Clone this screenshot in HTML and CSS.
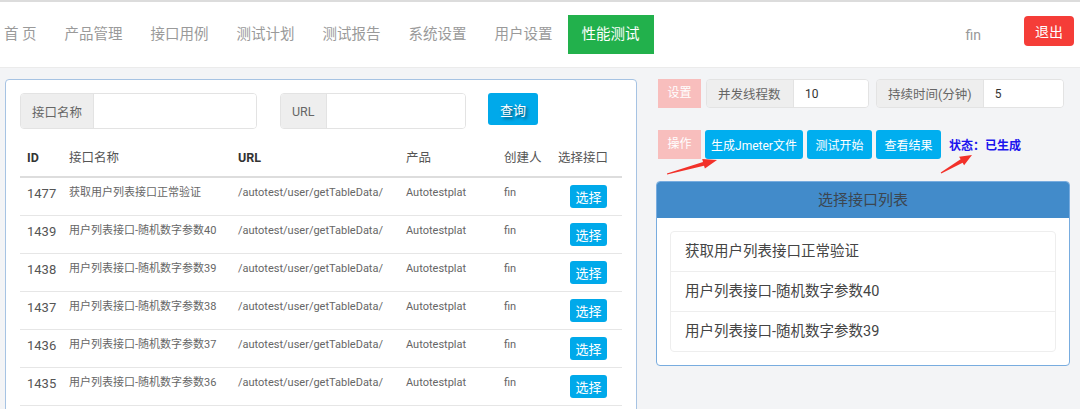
FILE: index.html
```html
<!DOCTYPE html>
<html>
<head>
    <meta charset="utf-8">
    <title>性能测试</title>
    <link rel="stylesheet" href="styles.css">
</head>
<body>
    <div id="header">
        <ul id="nav">
            <li class="nav-item first">首 页</li>
            <li class="nav-item">产品管理</li>
            <li class="nav-item">接口用例</li>
            <li class="nav-item">测试计划</li>
            <li class="nav-item">测试报告</li>
            <li class="nav-item">系统设置</li>
            <li class="nav-item">用户设置</li>
            <li class="nav-item active">性能测试</li>
        </ul>
        <div id="user-box">
            <span class="user-name">fin</span>
            <button class="logout-button">退出</button>
        </div>
    </div>

    <div id="main">
        <!-- 接口一覧 -->
        <div class="left-panel">
            <div class="search-row">
                <div class="input-group name-group">
                    <span class="input-label">接口名称</span>
                    <input class="input-box" type="text">
                </div>
                <div class="input-group url-group">
                    <span class="input-label">URL</span>
                    <input class="input-box" type="text">
                </div>
                <button class="search-button">查询</button>
            </div>

            <table class="api-table">
                <colgroup>
                    <col class="col-id">
                    <col class="col-name">
                    <col class="col-url">
                    <col class="col-product">
                    <col class="col-creator">
                    <col class="col-select">
                </colgroup>
                <thead>
                    <tr>
                        <th>ID</th>
                        <th>接口名称</th>
                        <th>URL</th>
                        <th>产品</th>
                        <th>创建人</th>
                        <th>选择接口</th>
                    </tr>
                </thead>
                <tbody>
                    <tr>
                        <td class="cell-id">1477</td>
                        <td>获取用户列表接口正常验证</td>
                        <td>/autotest/user/getTableData/</td>
                        <td>Autotestplat</td>
                        <td>fin</td>
                        <td><button class="select-button">选择</button></td>
                    </tr>
                    <tr>
                        <td class="cell-id">1439</td>
                        <td>用户列表接口-随机数字参数40</td>
                        <td>/autotest/user/getTableData/</td>
                        <td>Autotestplat</td>
                        <td>fin</td>
                        <td><button class="select-button">选择</button></td>
                    </tr>
                    <tr>
                        <td class="cell-id">1438</td>
                        <td>用户列表接口-随机数字参数39</td>
                        <td>/autotest/user/getTableData/</td>
                        <td>Autotestplat</td>
                        <td>fin</td>
                        <td><button class="select-button">选择</button></td>
                    </tr>
                    <tr>
                        <td class="cell-id">1437</td>
                        <td>用户列表接口-随机数字参数38</td>
                        <td>/autotest/user/getTableData/</td>
                        <td>Autotestplat</td>
                        <td>fin</td>
                        <td><button class="select-button">选择</button></td>
                    </tr>
                    <tr>
                        <td class="cell-id">1436</td>
                        <td>用户列表接口-随机数字参数37</td>
                        <td>/autotest/user/getTableData/</td>
                        <td>Autotestplat</td>
                        <td>fin</td>
                        <td><button class="select-button">选择</button></td>
                    </tr>
                    <tr>
                        <td class="cell-id">1435</td>
                        <td>用户列表接口-随机数字参数36</td>
                        <td>/autotest/user/getTableData/</td>
                        <td>Autotestplat</td>
                        <td>fin</td>
                        <td><button class="select-button">选择</button></td>
                    </tr>
                    <tr>
                        <td class="cell-id">&nbsp;</td>
                        <td></td>
                        <td></td>
                        <td></td>
                        <td></td>
                        <td></td>
                    </tr>
                </tbody>
            </table>
        </div>

        <!-- 設定と操作 -->
        <div class="right-column">
            <div class="setting-row">
                <span class="tag-label">设置</span>
                <div class="input-group thread-group">
                    <span class="input-label">并发线程数</span>
                    <input class="input-box small" type="text" value="10">
                </div>
                <div class="input-group time-group">
                    <span class="input-label">持续时间(分钟)</span>
                    <input class="input-box small" type="text" value="5">
                </div>
            </div>

            <div class="action-row">
                <span class="tag-label">操作</span>
                <button class="action-button jmeter">生成Jmeter文件</button>
                <button class="action-button">测试开始</button>
                <button class="action-button">查看结果</button>
                <span class="status-text">状态：已生成</span>
            </div>

            <div class="list-panel">
                <div class="list-heading">选择接口列表</div>
                <div class="list-body">
                    <ul class="list-group">
                        <li>获取用户列表接口正常验证</li>
                        <li>用户列表接口-随机数字参数40</li>
                        <li>用户列表接口-随机数字参数39</li>
                    </ul>
                </div>
            </div>
        </div>
    </div>

    <!-- 赤い矢印 -->
    <svg class="arrows" width="1080" height="409" viewBox="0 0 1080 409">
        <polygon fill="#f2312a" points="667.1,172.5 704,163.7 704.9,166.6 717,158 702.2,157 703,159.9 666.9,171.5"/>
        <polygon fill="#f2312a" points="941.3,171.4 962.6,160.7 964.1,163.3 972,153 959.1,154.7 960.6,157.3 940.7,170.6"/>
    </svg>
</body>
</html>
```

FILE: styles.css
```css
/* 全体 */
body {
    margin: 0;
    height: 409px;
    overflow: hidden;
    position: relative;
    background-color: #f3f4f6;
    font-family: Roboto, "Noto Sans CJK SC", sans-serif;
    color: #555;
    border-top: 2px solid #dcdcdc;
    box-sizing: border-box;
}

button,
input {
    font-family: Roboto, "Noto Sans CJK SC", sans-serif;
}

/* ヘッダー */
#header {
    height: 65px;
    background-color: #fff;
    border-bottom: 1px solid #ebebeb;
    display: flex;
    align-items: center;
}

#nav {
    list-style: none;
    margin: 0;
    padding: 0;
    display: flex;
    align-items: center;
}

.nav-item {
    font-size: 14.5px;
    color: #9a9a9a;
    padding: 0 14px;
    height: 39px;
    line-height: 39px;
}

.nav-item.first {
    margin-left: -10px;
}

.nav-item.active {
    background-color: #22b14c;
    color: #fff;
    margin-left: 1px;
}

#user-box {
    margin-left: auto;
    display: flex;
    align-items: center;
    padding-right: 6px;
}

.user-name {
    font-size: 14px;
    color: #999;
    margin-right: 43px;
}

.logout-button {
    width: 50px;
    height: 30px;
    border: none;
    border-radius: 4px;
    background-color: #f53d38;
    color: #fff;
    font-size: 14px;
    padding: 0;
    margin-top: -8px;
}

/* メイン */
#main {
    display: flex;
    align-items: flex-start;
    padding-top: 11px;
}

.left-panel {
    width: 603px;
    margin-left: 5px;
    background-color: #fff;
    border: 1px solid #a6c3e3;
    border-radius: 4px;
    padding: 13px 13px 40px 14px;
}

.search-row {
    display: flex;
    align-items: flex-start;
}

.input-group {
    display: flex;
    height: 36px;
    border: 1px solid #e3e3e3;
    border-radius: 4px;
    box-sizing: border-box;
    overflow: hidden;
}

.input-label {
    background-color: #eee;
    border-right: 1px solid #e3e3e3;
    font-size: 12.5px;
    color: #666;
    padding: 0 11px;
    display: flex;
    align-items: center;
    white-space: nowrap;
}

.input-box {
    border: none;
    outline: none;
    flex: 1;
    min-width: 0;
    padding: 0 10px;
    font-size: 12px;
    color: #333;
}

.name-group {
    width: 237px;
}

.url-group {
    width: 186px;
    margin-left: 23px;
}

.search-button {
    width: 50px;
    height: 32px;
    margin-left: 22px;
    border: none;
    border-radius: 3px;
    background-color: #00a9ea;
    color: #fff;
    font-size: 13px;
    padding: 0;
    text-shadow: 2px 2px 3px rgba(0, 0, 0, 0.55);
}

/* テーブル */
.api-table {
    width: 602px;
    margin-top: 11px;
    border-collapse: collapse;
    table-layout: fixed;
}

.col-id { width: 42px; }
.col-name { width: 169px; }
.col-url { width: 168px; }
.col-product { width: 98px; }
.col-creator { width: 54px; }
.col-select { width: 71px; }

.api-table th {
    text-align: left;
    font-size: 12.5px;
    font-weight: normal;
    color: #555;
    padding: 8px 0 8px 7px;
    line-height: 20px;
    border-bottom: 2px solid #ddd;
    white-space: nowrap;
}

.api-table th:first-child,
.api-table th:nth-child(3) {
    font-weight: bold;
    color: #333;
}

.api-table td {
    font-size: 11px;
    color: #666;
    padding: 7px 0 7px 7px;
    line-height: 16px;
    vertical-align: top;
    border-bottom: 1px solid #e6e6e6;
    white-space: nowrap;
    overflow: hidden;
}

.api-table td:nth-child(6) {
    padding-left: 19px;
}

.api-table td.cell-id {
    font-size: 13px;
    color: #555;
    padding-top: 8px;
}

.select-button {
    width: 37px;
    height: 23px;
    border: none;
    border-radius: 3px;
    background-color: #00a9ea;
    color: #fff;
    font-size: 13px;
    padding: 0;
    display: block;
}

/* 右側 */
.right-column {
    width: 414px;
    margin-left: 19px;
}

.setting-row,
.action-row {
    display: flex;
    align-items: center;
    padding-left: 2px;
    height: 29px;
}

.action-row {
    margin-top: 22px;
}

.tag-label {
    width: 43px;
    height: 29px;
    line-height: 29px;
    text-align: center;
    background-color: #f8bebd;
    color: #fff;
    font-size: 12px;
}

.setting-row .input-group {
    height: 29px;
}

.thread-group {
    width: 163px;
    margin-left: 5px;
}

.thread-group .input-label {
    width: 64px;
}

.time-group {
    width: 188px;
    margin-left: 7px;
}

.input-box.small {
    font-size: 12px;
    padding: 0 11px;
}

.action-button {
    height: 29px;
    margin-left: 4px;
    border: none;
    border-radius: 3px;
    background-color: #00aeef;
    color: #fff;
    font-size: 12px;
    padding: 0;
    width: 65px;
}

.action-button.jmeter {
    width: 98px;
}

.status-text {
    margin-left: 8px;
    font-size: 12px;
    font-weight: bold;
    color: #1c14ee;
}

/* 選択リスト */
.list-panel {
    margin-top: 22px;
    background-color: #fff;
    border: 1px solid #78acdf;
    border-radius: 4px;
    overflow: hidden;
}

.list-heading {
    height: 36px;
    line-height: 36px;
    background-color: #428bca;
    color: #3c4650;
    text-align: center;
    font-size: 15px;
}

.list-body {
    padding: 13px;
}

.list-group {
    list-style: none;
    margin: 0;
    padding: 0;
    border: 1px solid #eee;
    border-radius: 4px;
}

.list-group li {
    height: 39px;
    line-height: 39px;
    padding-left: 14px;
    font-size: 14.5px;
    color: #444;
    border-top: 1px solid #eee;
}

.list-group li:first-child {
    border-top: none;
}

/* 矢印 */
.arrows {
    position: absolute;
    top: 0;
    left: 0;
    pointer-events: none;
}
```
